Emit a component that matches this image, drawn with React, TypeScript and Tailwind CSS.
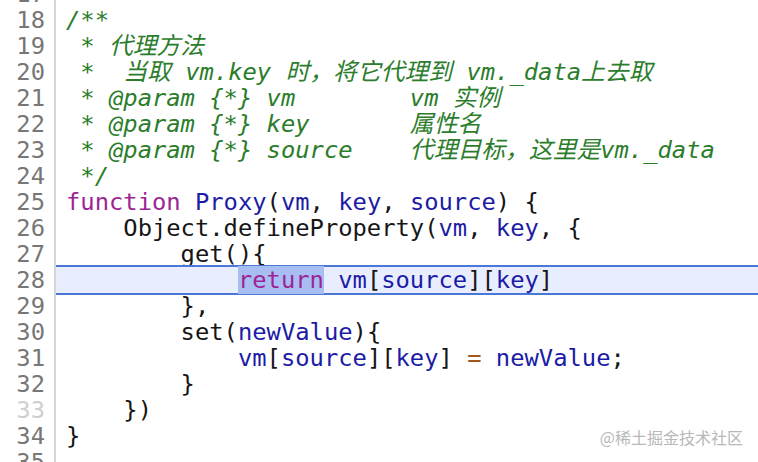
import React from "react";

type Tok = [string, string?];

const C = "text-[#2b7d2b] italic";
const K = "text-[#9c2595]";
const V = "text-[#1c1ca6]";
const O = "text-[#a0561f]";

// each line: list of [text, className]
const lines: { n: number; toks: Tok[]; faint?: boolean; active?: boolean }[] = [
  { n: 17, toks: [] },
  { n: 18, toks: [["/**", C]] },
  { n: 19, toks: [[" * 代理方法", C]] },
  { n: 20, toks: [[" *  当取 vm.key 时，将它代理到 vm._data上去取", C]] },
  { n: 21, toks: [[" * @param {*} vm        vm 实例", C]] },
  { n: 22, toks: [[" * @param {*} key       属性名", C]] },
  { n: 23, toks: [[" * @param {*} source    代理目标，这里是vm._data", C]] },
  { n: 24, toks: [[" */", C]] },
  {
    n: 25,
    toks: [
      ["function", K],
      [" "],
      ["Proxy", V],
      ["("],
      ["vm", V],
      [", "],
      ["key", V],
      [", "],
      ["source", V],
      [") {"],
    ],
  },
  {
    n: 26,
    toks: [["    Object.defineProperty("], ["vm", V], [", "], ["key", V], [", {"]],
  },
  { n: 27, toks: [["        get(){"]] },
  {
    n: 28,
    active: true,
    toks: [
      ["            "],
      ["return", K + " bg-[#a8bef3]"],
      [" "],
      ["vm", V],
      ["["],
      ["source", V],
      ["]["],
      ["key", V],
      ["]"],
    ],
  },
  { n: 29, toks: [["        },"]] },
  { n: 30, toks: [["        set("], ["newValue", V], ["){"]] },
  {
    n: 31,
    toks: [
      ["            "],
      ["vm", V],
      ["["],
      ["source", V],
      ["]["],
      ["key", V],
      ["] "],
      ["=", O],
      [" "],
      ["newValue", V],
      [";"],
    ],
  },
  { n: 32, toks: [["        }"]] },
  { n: 33, toks: [["    })"]], faint: true },
  { n: 34, toks: [["}"]] },
  { n: 35, toks: [] },
];

const App: React.FC = () => {
  return (
    <div className="relative w-[758px] h-[462px] overflow-hidden bg-white">
      <div
        className="-mt-[19px] flex flex-col text-[23.8px] leading-[26px] text-[#161616]"
        style={{ fontFamily: '"DejaVu Sans Mono", "Noto Sans CJK SC", monospace' }}
      >
        {lines.map((line) => (
          <div key={line.n} className="flex h-[26px]">
            <div
              className={`w-[56px] shrink-0 pr-[9px] text-right border-r-2 border-[#d6d6d6] ${
                line.faint ? "text-[#cfcfcf]" : "text-[#777777]"
              }`}
            >
              {line.n}
            </div>
            <div
              className={`flex-1 pl-[10px] whitespace-pre ${
                line.active
                  ? "relative z-10 -my-[2px] h-[30px] border-y-2 border-[#4b77d6] bg-[#e8eefd]"
                  : ""
              }`}
            >
              {line.toks.map(([text, cls], i) => (
                <span key={i} className={cls}>
                  {text}
                </span>
              ))}
            </div>
          </div>
        ))}
      </div>
      <div
        className="absolute right-[15px] bottom-[15px] text-[16px] leading-[20px] text-[#b8b8b8]"
        style={{ fontFamily: '"Noto Sans CJK SC", sans-serif' }}
      >
        @稀土掘金技术社区
      </div>
    </div>
  );
};

export default App;
